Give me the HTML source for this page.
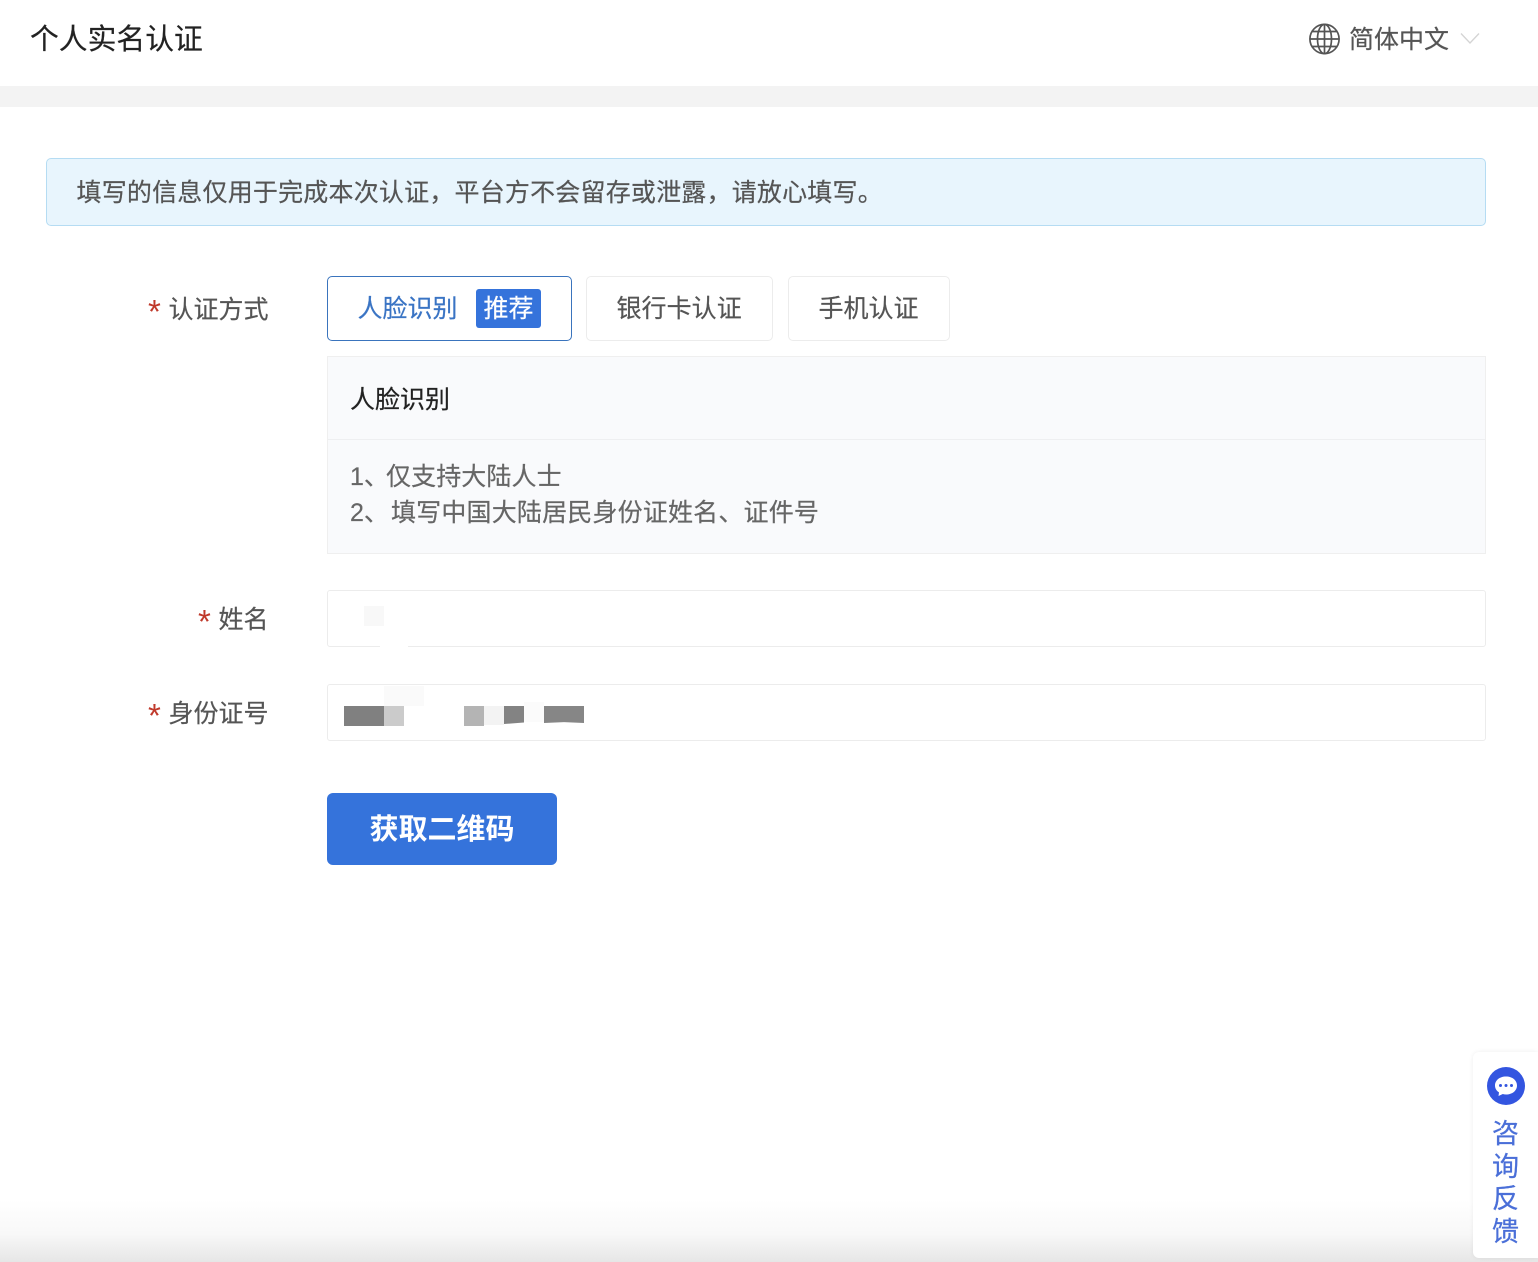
<!DOCTYPE html>
<html lang="zh"><head><meta charset="utf-8"><title>个人实名认证</title>
<style>
html,body{margin:0;padding:0;background:#fff}
body{position:relative;width:1538px;height:1262px;overflow:hidden;font-family:"Liberation Sans","Noto Sans CJK SC",sans-serif;color:#555}
.a{position:absolute;white-space:nowrap;box-sizing:border-box}
.t{line-height:36px;height:36px;-webkit-text-stroke:.2px currentColor}
.star{color:#c0392b;font-size:33px;line-height:36px;height:36px}
.box{border:1px solid #ececec;border-radius:3px;background:#fff}
.p{position:absolute;background:#888}
</style></head><body>
<div class="a t" style="left:30px;top:22px;font-size:28.800px;color:#222">个人实名认证</div>
<svg class="a" style="left:1308px;top:23px" width="33" height="32" viewBox="0 0 33 32" fill="none" stroke="#555" stroke-width="1.7"><circle cx="16.5" cy="16" r="14.6"/><ellipse cx="16.5" cy="16" rx="7" ry="14.6"/><path d="M16.5 1.4V30.6M2 16H31M4 8.5H29M4 23.500H29"/></svg>
<div class="a t" style="left:1349px;top:22px;font-size:25px;color:#555">简体中文</div>
<svg class="a" style="left:1460px;top:32px" width="20" height="13" viewBox="0 0 20 13" fill="none" stroke="#d4d4d4" stroke-width="1.3"><path d="M1 1.5L10 11L19 1.5"/></svg>
<div class="a" style="left:0;top:86px;width:1538px;height:21px;background:#f3f3f3"></div>

<div class="a" style="left:46px;top:158px;width:1440px;height:68px;background:#e8f5fd;border:1px solid #b5dcf3;border-radius:5px"></div>
<div class="a t" style="left:76.500px;top:175px;font-size:25px;letter-spacing:.2px;color:#555">填写的信息仅用于完成本次认证，平台方不会留存或泄露，请放心填写。</div>

<div class="a star" style="left:148px;top:294px">*</div>
<div class="a t" style="left:168.500px;top:292px;font-size:25px;color:#555">认证方式</div>
<div class="a" style="left:327px;top:276px;width:245px;height:65px;border:1px solid #3a74bd;border-radius:5px;background:#fff"></div>
<div class="a t" style="left:357.500px;top:291px;font-size:25px;color:#3a74c4">人脸识别</div>
<div class="a" style="left:476px;top:289px;width:65px;height:39px;background:#3573db;border-radius:3px;color:#fff;font-size:25px;line-height:40px;text-align:center;-webkit-text-stroke:.2px #fff">推荐</div>
<div class="a box" style="left:586px;top:276px;width:187px;height:65px;border-radius:5px"></div>
<div class="a t" style="left:616.500px;top:291px;font-size:25px;letter-spacing:.05px;color:#555">银行卡认证</div>
<div class="a box" style="left:788px;top:276px;width:162px;height:65px;border-radius:5px"></div>
<div class="a t" style="left:818.500px;top:291px;font-size:25px;color:#555">手机认证</div>

<div class="a" style="left:327px;top:356px;width:1159px;height:198px;background:#f9fafc;border:1px solid #efefef"></div>
<div class="a" style="left:328px;top:439px;width:1157px;height:1px;background:#eeeff1"></div>
<div class="a t" style="left:350px;top:382px;font-size:25px;color:#222">人脸识别</div>
<div class="a t" style="left:350px;top:459px;font-size:25px;color:#666">1、</div>
<div class="a t" style="left:386px;top:459px;font-size:25px;letter-spacing:.1px;color:#666">仅支持大陆人士</div>
<div class="a t" style="left:350px;top:495px;font-size:25px;color:#666">2、</div>
<div class="a t" style="left:391px;top:495px;font-size:25px;letter-spacing:.18px;color:#666">填写中国大陆居民身份证姓名、证件号</div>

<div class="a star" style="left:198px;top:604px">*</div>
<div class="a t" style="left:218.500px;top:602px;font-size:25px;color:#555">姓名</div>
<div class="a box" style="left:327px;top:590px;width:1159px;height:57px"></div>
<div class="p" style="left:364px;top:606px;width:20px;height:20px;background:#f8f8f8"></div>
<div class="p" style="left:380px;top:645px;width:28px;height:3px;background:#fff"></div>

<div class="a star" style="left:148px;top:698px">*</div>
<div class="a t" style="left:168.500px;top:696px;font-size:25px;color:#555">身份证号</div>
<div class="a box" style="left:327px;top:684px;width:1159px;height:57px"></div>
<div class="p" style="left:384px;top:686px;width:40px;height:20px;background:#fafafa"></div>
<div class="p" style="left:344px;top:706px;width:40px;height:20px;background:#808080"></div>
<div class="p" style="left:384px;top:706px;width:20px;height:20px;background:#cbcbcb"></div>
<div class="p" style="left:464px;top:706px;width:20px;height:20px;background:#b4b4b4"></div>
<div class="p" style="left:484px;top:706px;width:20px;height:19px;background:#f3f3f3"></div>
<div class="p" style="left:504px;top:706px;width:20px;height:18px;background:#838383;clip-path:polygon(0 0,100% 0,100% 92%,0 100%)"></div>
<div class="p" style="left:524px;top:702px;width:20px;height:20px;background:#fbfbfb"></div>
<div class="p" style="left:544px;top:706px;width:40px;height:17px;background:#868686;clip-path:polygon(0 0,100% 0,100% 100%,50% 95%,0 100%)"></div>

<div class="a" style="left:327px;top:793px;width:230px;height:72px;background:#3573db;border-radius:6px;color:#fff;font-size:29px;font-weight:bold;line-height:74px;text-align:center">获取二维码</div>

<div class="a" style="left:0;top:1200px;width:1538px;height:62px;background:linear-gradient(to bottom,#fff 0%,#f8f8f8 55%,#e6e6e6 100%)"></div>
<div class="a" style="left:1473px;top:1052px;width:65px;height:206px;background:#fff;border-radius:6px 0 0 6px;box-shadow:0 0 5px rgba(0,0,0,.07)"></div>
<svg class="a" style="left:1487px;top:1067px" width="38" height="38" viewBox="0 0 38 38"><circle cx="19" cy="19" r="19" fill="#3355e0"/><path d="M19 9.5C12.400 9.500 8 13.500 8 18.500C8 21.500 9.600 23.900 12 25.400L11.500 29L15.800 27C16.800 27.300 17.900 27.500 19 27.500C25.600 27.500 30 23.500 30 18.500C30 13.500 25.600 9.500 19 9.500Z" fill="#fff"/><circle cx="13.500" cy="18.500" r="1.500" fill="#3355e0"/><circle cx="19" cy="18.500" r="1.500" fill="#3355e0"/><circle cx="24.500" cy="18.500" r="1.500" fill="#3355e0"/></svg>
<div class="a" style="left:1491px;top:1118px;width:29px;font-size:27px;line-height:32.700px;color:#4a6fd8;white-space:normal;text-align:center;-webkit-text-stroke:.25px #4a6fd8">咨询反馈</div>
</body></html>
